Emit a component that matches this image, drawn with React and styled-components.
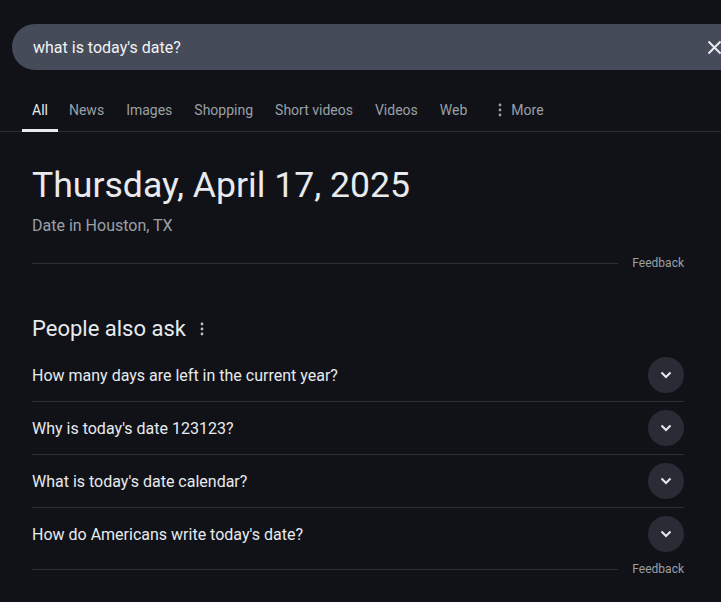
import React from 'react'
import styled, { createGlobalStyle } from 'styled-components'

const Global = createGlobalStyle`
  html, body {
    margin: 0;
    padding: 0;
    background: #101218;
    overflow: hidden;
  }
  body {
    font-family: Roboto, "Liberation Sans", Arial, sans-serif;
    color: #e8eaed;
  }
`

const Page = styled.div`
  width: 721px;
  height: 602px;
  overflow: hidden;
  background: #101218;
`

const SearchRow = styled.div`
  padding: 24px 0 0 12px;
`

const SearchBar = styled.div`
  width: 740px;
  height: 46px;
  border-radius: 23px;
  background: #464b5a;
  display: flex;
  align-items: center;
  padding-left: 21px;
  box-sizing: border-box;
`

const Query = styled.span`
  flex: 1;
  font-size: 16px;
  color: #f1f3f4;
`

const Clear = styled.span`
  width: 45px;
  display: flex;
  align-items: center;
`

const Tabs = styled.nav`
  display: flex;
  margin-top: 26px;
  padding-left: 22px;
  border-bottom: 1px solid #2d2f36;
`

const Tab = styled.div`
  padding: 6px 11px 11px;
  font-size: 14px;
  color: ${({ $active }) => ($active ? '#e8eaed' : '#9aa0a6')};
  border-bottom: 3px solid ${({ $active }) => ($active ? '#e8eaed' : 'transparent')};
  margin-bottom: -1px;
  display: flex;
  align-items: center;
  gap: 9px;
  &:first-child { padding-left: 10px; padding-right: 10px; }
`

const MoreTab = styled(Tab)`
  margin-left: 9px;
`

const Main = styled.main`
  width: 652px;
  margin-left: 32px;
`

const DateTitle = styled.h1`
  margin: 31px 0 0;
  font-size: 35.6px;
  font-weight: 400;
  line-height: 44px;
  color: #e8eaed;
`

const Location = styled.div`
  margin-top: 9px;
  font-size: 16px;
  color: #9aa0a6;
`

const FeedbackRow = styled.div`
  display: flex;
  align-items: center;
  gap: 14px;
  margin-top: ${({ $top }) => $top}px;
`

const Rule = styled.div`
  flex: 1;
  height: 1px;
  background: #2d2f36;
`

const Feedback = styled.span`
  font-size: 12px;
  color: #9aa0a6;
`

const AskHeader = styled.div`
  display: flex;
  align-items: center;
  gap: 14px;
  margin-top: 46px;
  margin-bottom: 8px;
`

const AskTitle = styled.h2`
  margin: 0;
  font-size: 22px;
  font-weight: 400;
  color: #e8eaed;
`

const Question = styled.div`
  height: 52px;
  display: flex;
  align-items: center;
  justify-content: space-between;
  border-bottom: ${({ $last }) => ($last ? 'none' : '1px solid #2d2f36')};
  font-size: 16px;
  color: #e8eaed;
`

const Chevron = styled.div`
  width: 36px;
  height: 36px;
  border-radius: 50%;
  background: #2a2c35;
  display: flex;
  align-items: center;
  justify-content: center;
`

const Dots = ({ color = '#9aa0a6' }) => (
  <svg width="4" height="14" viewBox="0 0 4 14">
    <circle cx="2" cy="2" r="1.4" fill={color} />
    <circle cx="2" cy="7" r="1.4" fill={color} />
    <circle cx="2" cy="12" r="1.4" fill={color} />
  </svg>
)

const questions = [
  'How many days are left in the current year?',
  "Why is today's date 123123?",
  "What is today's date calendar?",
  "How do Americans write today's date?",
]

const tabs = ['All', 'News', 'Images', 'Shopping', 'Short videos', 'Videos', 'Web']

export default function App() {
  return (
    <Page>
      <Global />
      <SearchRow>
        <SearchBar>
          <Query>what is today's date?</Query>
          <Clear>
            <svg width="15" height="15" viewBox="0 0 15 15">
              <path d="M1.5 1.5 L13.5 13.5 M13.5 1.5 L1.5 13.5" stroke="#e8eaed" strokeWidth="2" />
            </svg>
          </Clear>
        </SearchBar>
      </SearchRow>
      <Tabs>
        {tabs.map((t, i) => (
          <Tab key={t} $active={i === 0}>{t}</Tab>
        ))}
        <MoreTab><Dots /> More</MoreTab>
      </Tabs>
      <Main>
        <DateTitle>Thursday, April 17, 2025</DateTitle>
        <Location>Date in Houston, TX</Location>
        <FeedbackRow $top={21}>
          <Rule />
          <Feedback>Feedback</Feedback>
        </FeedbackRow>
        <AskHeader>
          <AskTitle>People also ask</AskTitle>
          <Dots color="#bdc1c6" />
        </AskHeader>
        {questions.map((q, i) => (
          <Question key={q} $last={i === questions.length - 1}>
            <span>{q}</span>
            <Chevron>
              <svg width="12" height="8" viewBox="0 0 12 8">
                <path d="M1.5 1.5 L6 6 L10.5 1.5" stroke="#e8eaed" strokeWidth="2" fill="none" />
              </svg>
            </Chevron>
          </Question>
        ))}
        <FeedbackRow $top={2}>
          <Rule />
          <Feedback>Feedback</Feedback>
        </FeedbackRow>
      </Main>
    </Page>
  )
}
